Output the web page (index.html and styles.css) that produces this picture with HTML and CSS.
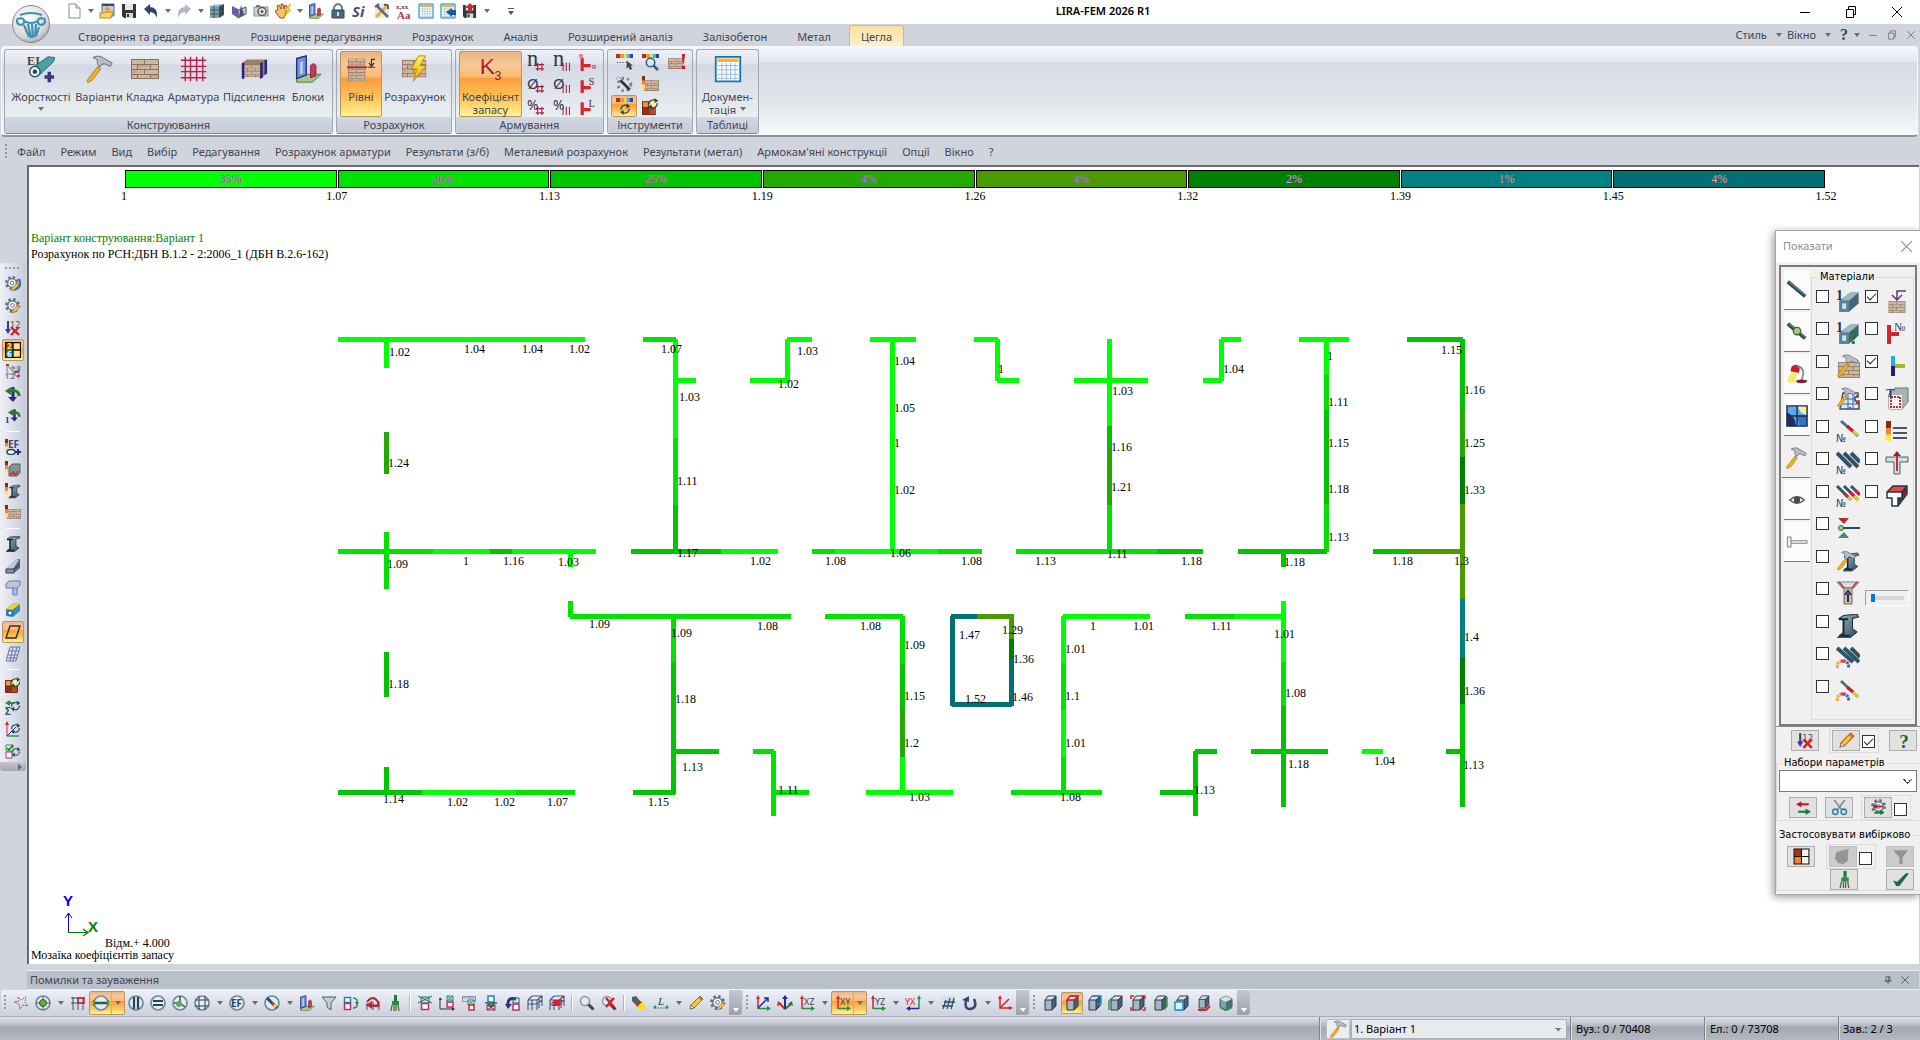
FILE: index.html
```html
<!DOCTYPE html>
<html lang="uk">
<head>
<meta charset="utf-8">
<title>LIRA-FEM 2026 R1</title>
<link rel="stylesheet" href="styles.css">
</head>
<body>
<svg class="defs" aria-hidden="true">
<defs>
<linearGradient id="steel" x1="0" y1="0" x2="1" y2="1"><stop offset="0" stop-color="#9dbdca"/><stop offset="1" stop-color="#2c4454"/></linearGradient>
<linearGradient id="bolt" x1="0" y1="0" x2="0" y2="1"><stop offset="0" stop-color="#fff35c"/><stop offset="1" stop-color="#f0a800"/></linearGradient>
<linearGradient id="kgrad" x1="0" y1="0" x2="0" y2="1"><stop offset="0" stop-color="#f0243c"/><stop offset="1" stop-color="#5c2238"/></linearGradient>
<radialGradient id="orb" cx=".4" cy=".3" r=".8"><stop offset="0" stop-color="#fff"/><stop offset=".7" stop-color="#d4d6d9"/><stop offset="1" stop-color="#8f9297"/></radialGradient>
</defs>
<symbol id="brick" viewBox="0 0 28 20"><path fill="#8a7260" d="M0 0h28v20H0z"/><path fill="#cbb89d" d="M1 1h12v4H1zM14 1h13v4H14zM1 6h5v4H1zM7 6h12v4H7zM20 6h7v4h-7zM1 11h12v4H1zM14 11h13v4H14zM1 16h5v3H1zM7 16h12v3H7zM20 16h7v3h-7z"/><path fill="#c9a391" d="M7 6h12v2H7zM1 11h5v3H1zM20 16h7v2h-7z"/></symbol>
<symbol id="hammer" viewBox="0 0 32 32"><path d="M20 8 10 22" stroke="#9aa0a6" stroke-width="3"/><path d="M14 14 3 28q-2 4 2 3l4-3 9-12z" fill="#f2b01e" stroke="#b87b10"/><path d="M9 3q7-4 13 1l9 5-2 4-7-3q-3 0-5 3l-3-3q2-5-5-7z" fill="#b9bec3" stroke="#5d6267"/></symbol>
<symbol id="pencil" viewBox="0 0 16 16"><path d="M2 14 3 10 12 1 15 4 6 13z" fill="#f8c53a" stroke="#a8651a"/><path d="M2 14 3 10 6 13z" fill="#eee" stroke="#555" stroke-width=".6"/><path d="m11 2 3 3" stroke="#d06a5a" stroke-width="2"/></symbol>
<symbol id="gear" viewBox="0 0 16 16"><circle cx="8" cy="8" r="6.500" fill="none" stroke="#5f7080" stroke-width="3" stroke-dasharray="2.600 2.500"/><circle cx="8" cy="8" r="5" fill="#eef1f5" stroke="#5f7080" stroke-width="1.500"/><circle cx="8" cy="8" r="2" fill="#fff" stroke="#5f7080"/></symbol>
<symbol id="cycle" viewBox="0 0 16 16"><g fill="none" stroke="#23465c" stroke-width="1.600"><path d="M2.500 9a5.500 5.500 0 0 1 9-5M13.500 7a5.500 5.500 0 0 1-9 5"/></g><path d="m10 0 5 4-5 3zM6 9v7l-5-4z" fill="#23465c"/></symbol>
<symbol id="gearcycle" viewBox="0 0 16 16"><use href="#gear" x="0" y="0" width="14" height="14"/><path d="M14 3q4 8-5 11" fill="none" stroke="#2f6d9c" stroke-width="2"/><use href="#pencil" x="5" y="6" width="10" height="10"/></symbol>
<symbol id="gearpen" viewBox="0 0 16 16"><use href="#gear" x="0" y="0" width="15" height="15"/><use href="#pencil" x="6" y="6" width="10" height="10"/></symbol>
<symbol id="down12x" viewBox="0 0 16 16"><path d="M3 1v9" stroke="#353a9c" stroke-width="2"/><path d="M0 9h6l-3 5z" fill="#353a9c"/><text x="5" y="8" font-size="9" fill="#555">12</text><path d="m6 7 8 8M14 7l-8 8" stroke="#d4202a" stroke-width="2.400"/></symbol>
<symbol id="tiles" viewBox="0 0 16 16"><path fill="#c22b14" d="M1 1h7v7H1z"/><path fill="#1878bd" d="M1 8h7v7H1z"/><path fill="#ffe08a" d="M8 1h7v14H8z"/><path d="M.5.500h15v15H.5zM8 0v16M8 8h7" fill="none" stroke="#111" stroke-width="1.300"/><text x="2" y="7" font-size="8" font-weight="bold" fill="#ff0">2</text><text x="2" y="15" font-size="8" font-weight="bold" fill="#fff">6</text></symbol>
<symbol id="mesh12" viewBox="0 0 16 16"><path d="M2 1 14 15M2 1v9h9M5 4h9v9" fill="none" stroke="#7f8b94"/><path d="M1 1h3M9 8h5M12 12h3" stroke="#b03a3a" stroke-width="2"/><text x="6" y="7" font-size="7" fill="#444">1.2</text><text x="0" y="15" font-size="7" fill="#444">1.2</text></symbol>
<symbol id="rot3d" viewBox="0 0 16 16"><path d="M8 1v11" stroke="#282a80" stroke-width="3"/><path d="M3 11h9l-4 5z" fill="#282a80"/><path d="M3 5q11-2 11 5" fill="none" stroke="#2a7d25" stroke-width="3"/><path d="M0 5 6 1v8z" fill="#2a7d25"/></symbol>
<symbol id="rot1" viewBox="0 0 16 16"><use href="#rot3d" x="3" width="13" height="14"/><text x="0" y="15" font-size="9" font-weight="bold" font-family="Liberation Serif" fill="#30308c">1</text></symbol>
<symbol id="scale" viewBox="0 0 4 16" preserveAspectRatio="none"><path fill="#8c2a10" d="M0 0h4v6H0z"/><path fill="#f5832a" d="M0 6h4v5H0z"/><path fill="#ffe84a" d="M0 11h4v5H0z"/></symbol>
<symbol id="ef" viewBox="0 0 16 16"><use href="#scale" width="3" height="11"/><text x="3" y="9" font-size="10" font-weight="bold" fill="#3c4a7a">EF</text><ellipse cx="6" cy="13" rx="4" ry="2.500" fill="#fff" stroke="#23465c" stroke-width="1.500"/><path d="M10 13h6M13 10v6" stroke="#2a2a8c" stroke-width="2"/></symbol>
<symbol id="slab" viewBox="0 0 16 16"><use href="#scale" width="3" height="12"/><path d="m4 6 3-3h8v9l-3 3H4z" fill="#7f9494" stroke="#4f6060"/><path d="m5 14 3-3 2 3 3-4" stroke="#d42a2a" stroke-width="1.500" fill="none"/></symbol>
<symbol id="ibeam" viewBox="0 0 16 16"><path d="m5 1 9-1 1 2-4 1v7l3 2-5 4H1l3-3h1V4L2 3z" fill="url(#steel)" stroke="#20323c" stroke-width=".7"/><path d="M2 3.500h6M2 14.500h7M5 4v10" stroke="#17252d" stroke-width="1.300"/></symbol>
<symbol id="ibeamscale" viewBox="0 0 16 16"><use href="#scale" width="3" height="12"/><use href="#ibeam" x="3" y="1" width="13" height="15"/></symbol>
<symbol id="brickscale" viewBox="0 0 16 16"><use href="#brick" x="2" y="3" width="14" height="12"/><use href="#scale" width="3" height="12"/></symbol>
<symbol id="boxbeam" viewBox="0 0 16 16"><path d="m1 7 8-6h6v8l-7 6H1z" fill="#486476"/><path d="m1 7 8-6h6l-7 6z" fill="#9db8c6"/><path d="M1 7h7v8H1z" fill="#5f8194"/><path d="M3 9h3v4H3z" fill="#bfe9f2"/></symbol>
<symbol id="wedge" viewBox="0 0 16 16"><path d="M1 11 12 1h3v9l-6 5H1z" fill="#50697a"/><path d="M1 11 12 1l2 1-6 9z" fill="#b9ccd8"/><path d="M1 11h8v4H1zM9 11l6-5" fill="#7d98a8" stroke="#2d4250"/></symbol>
<symbol id="tee" viewBox="0 0 16 16"><path d="m1 4 3-3h11v4l-3 3v6H8V8H1z" fill="#bcc6d6" stroke="#6f7c92"/><path d="M8 8h4v7H8z" fill="#a9bdf0" stroke="#6d86c6"/></symbol>
<symbol id="duct" viewBox="0 0 16 16"><path d="m1 7 8-6 6 1v7l-7 6-7-1z" fill="#2b8fc4"/><path d="m9 1 6 1-8 6-6-1z" fill="#f5d227"/><path d="M3 9h4v4H3z" fill="#fff" stroke="#124e70"/></symbol>
<symbol id="para" viewBox="0 0 16 16"><path d="M5 2h10l-4 12H1z" fill="none" stroke="#24323a" stroke-width="1.400"/></symbol>
<symbol id="paragrid" viewBox="0 0 16 16"><path d="M5 1h10l-4 14H1zM4 5h10M3 9h10M2 12h10M8 1 5 15M12 1 8 15" fill="none" stroke="#6d76a6"/></symbol>
<symbol id="tilecycle" viewBox="0 0 16 16"><path fill="#f09a3a" d="M0 3h6v6H0z"/><path fill="#982c14" d="M0 9h6v6H0z"/><path fill="#b8461c" d="M6 9h6v6H6z"/><path fill="#ffe572" d="M6 3h6v6H6z"/><path d="M.5 3.500h12v12H.5zM6 3v12M0 9h12" fill="none" stroke="#7a2a10"/><circle cx="10.500" cy="5.500" r="3.500" fill="#ffef9a"/><use href="#cycle" x="5" y="0" width="11" height="11"/></symbol>
<symbol id="sumcycle" viewBox="0 0 16 16"><text x="0" y="16" font-size="10" font-weight="bold" fill="#2c5a70">Σ</text><use href="#cycle" x="5" y="1" width="11" height="12"/><path d="M0 4 5 1v6z" fill="#318a3a"/><path d="M4 4h6" stroke="#318a3a" stroke-width="2"/></symbol>
<symbol id="axiscycle" viewBox="0 0 16 16"><path d="M2 15V3" stroke="#d22"/><path d="M2 15h12" stroke="#2a9a4a" stroke-width="1.500"/><path d="m2 15 9-9" stroke="#27318c"/><path d="M0 4l2-4 2 4z" fill="#d22"/><use href="#cycle" x="5" y="2" width="11" height="11"/></symbol>
<symbol id="boxcycle" viewBox="0 0 16 16"><path d="M1 2h7v6H1z" fill="#e9f6ea" stroke="#2b9140"/><path d="m2 5 2 2 4-5" fill="none" stroke="#147028" stroke-width="1.500"/><path d="M1 9h6v6H1z" fill="#fff" stroke="#c82a5a"/><use href="#cycle" x="6" y="3" width="10" height="12"/></symbol>

<symbol id="newdoc" viewBox="0 0 16 16"><path d="M3 1h7l4 4v10H3z" fill="#fff" stroke="#8c8c8c"/><path d="M10 1v4h4" fill="#ddd" stroke="#8c8c8c"/></symbol>
<symbol id="openwin" viewBox="0 0 16 16"><path d="M3 1h12v12H3z" fill="#c5cfdb" stroke="#5d6b80"/><path d="M3 1h12v2H3z" fill="#34496b"/><path d="M1 10h4l1-1h8l-2 6H1z" fill="#f7d469" stroke="#b48a20"/><path d="m8 3 4 4h-2v3H7V7H5z" fill="#e8a126"/></symbol>
<symbol id="save" viewBox="0 0 16 16"><path d="M1 1h14v14H3l-2-2z" fill="#34363c"/><path d="M4 1h8v6H4z" fill="#dfe8ea"/><path d="M5 10h7v5H5z" fill="#d5d5d5"/><path d="M6 11h2v3H6z" fill="#333"/></symbol>
<symbol id="undo" viewBox="0 0 16 16"><path d="m1 6 6-5v3q8 0 7 11-2-6-7-6v3z" fill="#34406c"/></symbol>
<symbol id="redo" viewBox="0 0 16 16"><path d="M15 6 9 1v3Q1 4 2 15q2-6 7-6v3z" fill="#aeb9c4"/></symbol>
<symbol id="frame3d" viewBox="0 0 16 16"><path d="M1 3h9v12H1z" fill="#7d9fae"/><path d="m1 3 4-2h10l-5 2z" fill="#b8d0da"/><path d="m10 3 5-2v11l-5 3z" fill="#37505e"/><path d="M1 7h9M1 11h9l5-2M10 7l5-2M5 3v12" stroke="#2e4452" fill="none" stroke-width=".8"/></symbol>
<symbol id="book" viewBox="0 0 16 16"><path d="m1 3 6 3v9l-6-4z" fill="#6c5cae"/><path d="m15 4-8 3v8l8-4z" fill="#a7d8a4" stroke="#46527f"/><path d="m10 2 3 10-5 2z" fill="#524588"/></symbol>
<symbol id="camera" viewBox="0 0 16 16"><path d="M1 4h14v9H1z" fill="#d3d3d3" stroke="#8d8d8d"/><path d="M3 2h4v2H3z" fill="#777"/><circle cx="9" cy="8.500" r="4" fill="#eee" stroke="#555" stroke-width="1.500"/><circle cx="9" cy="8.500" r="1.500" fill="#555"/></symbol>
<symbol id="hand" viewBox="0 0 16 16"><path d="M3 7 2 3l2-1 2 4V1h2l1 5 1-4 2 1-1 6-2 6H5l-3-4-2-3z" fill="#f6c36a" stroke="#8a5a1c"/><path d="m15 1-5 6 3 1-5 7 8-8-3-1 3-5z" fill="#ffdd1f" stroke="#c28a00" stroke-width=".5"/></symbol>
<symbol id="blocks" viewBox="0 0 32 32"><path d="m3 27 11-5h17l-10 9H3z" fill="#a6c884" stroke="#42732f"/><path d="m3 4 11-3v22L3 27z" fill="#6d94d8" stroke="#1e2f72" stroke-width="1.500"/><path d="m7 8 3-1v14l-3 1z" fill="#bcd0f4"/><path d="M19 12q4-4 6 0v12l-6 2z" fill="#d0365c" stroke="#7c1634"/></symbol>
<symbol id="lock" viewBox="0 0 16 16"><path d="M4 7V4q4-6 8 0v3" fill="none" stroke="#6f7f8a" stroke-width="2"/><path d="M2 7h12v8H2z" fill="#4b6a85" stroke="#2d4457"/><path d="M8 9v4" stroke="#d5e0ea" stroke-width="2"/></symbol>
<symbol id="si" viewBox="0 0 16 16"><text x="0" y="14" font-size="15" font-style="italic" font-weight="bold" fill="#4c4a74">Si</text></symbol>
<symbol id="tools" viewBox="0 0 16 16"><path d="M1 1h14v14H1z" fill="#e6e9ee"/><path d="m2 14 10-10" stroke="#e0b52b" stroke-width="3"/><path d="m3 3 11 11" stroke="#626a72" stroke-width="2.500"/><path d="M1 4l4-3M10 2q5-1 4 4" stroke="#555" stroke-width="2" fill="none"/></symbol>
<symbol id="xxaa" viewBox="0 0 16 16"><text x="0" y="6" font-size="7" font-family="Liberation Serif" font-weight="bold" fill="#7a2436">x,xx</text><text x="1" y="16" font-size="11" font-family="Liberation Serif" font-weight="bold" fill="#b8324a">Aa</text></symbol>
<symbol id="table" viewBox="0 0 32 32"><path d="M2 2h28v28H2z" fill="#fff" stroke="#1274b8" stroke-width="2"/><path d="M4 4h24v4H4z" fill="#f3b23c"/><path d="M4 12h24M4 17h24M4 22h24M4 27h24M9 9v19M14 9v19M19 9v19M24 9v19" stroke="#86b4d8"/></symbol>
<symbol id="tableleft" viewBox="0 0 16 16"><use href="#table" width="16" height="16"/><path d="m6 9 6-4v2h4v5h-4v2z" fill="#135e9e"/></symbol>
<symbol id="saveup" viewBox="0 0 16 16"><use href="#save" y="1" width="15" height="15"/><path d="m8 0 5 5h-3v4H6V5H3z" fill="#d8232c"/></symbol>
<symbol id="logo" viewBox="0 0 40 40"><circle cx="20" cy="20" r="18.500" fill="url(#orb)" stroke="#85888d"/><g fill="none" stroke="#3a93b4" stroke-width="2.200"><path d="M9 11q11-4 22 0M7 14q-3 6 3 7 4-1 3-5-2-3-5-1M33 14q3 6-3 7-4-1-3-5 2-3 5-1M13 17q7 4 14 0"/><path d="m13 21 5 12M17 20l3 14M21 20l1 14M25 20l-1 13M28 23l-3 9"/></g></symbol>

<symbol id="stiff" viewBox="0 0 32 32"><text x="0" y="11" font-size="14" font-weight="bold" font-family="Liberation Serif" fill="#444">EI</text><path d="M7 14 24 2l8 1-2 5-15 14z" fill="#49a3a5" stroke="#2d5f66"/><circle cx="9" cy="19" r="6" fill="#e3f0f0" stroke="#2b4c5c" stroke-width="1.500"/><circle cx="9" cy="19" r="2.500" fill="#24405a"/><path d="M20 25h11M25.500 19v12" stroke="#3c3480" stroke-width="4"/></symbol>
<symbol id="rebar" viewBox="0 0 32 32"><path d="M6 2v28M12 2v28M19 2v28M26 2v28M1 6h29M1 13h29M1 19h29M1 26h29" stroke="#c02048" stroke-width="1.600"/></symbol>
<symbol id="bricks3d" viewBox="0 0 32 32"><path d="m2 9 6-4h22v16l-6 6z" fill="#9b8068"/><use href="#brick" x="4" y="9" width="20" height="18"/><path d="M2 9h3v18H2zM23 9l3-1v18l-3 1zM28 6l3-1v16l-3 2z" fill="#2b2680"/></symbol>
<symbol id="levels" viewBox="0 0 32 32"><use href="#brick" x="0" y="4" width="22" height="14"/><use href="#brick" x="0" y="16" width="22" height="14"/><path d="M0 14h23" stroke="#d01818" stroke-width="2"/><path d="M24 14h8M28 13V5h4M25 9l3 4 3-4" stroke="#333" fill="none" stroke-width="1.300"/></symbol>
<symbol id="calc" viewBox="0 0 32 32"><use href="#brick" x="1" y="5" width="28" height="21"/><path d="M20 1 12 16h6l-4 14 15-18h-7l6-11z" fill="url(#bolt)" stroke="#b87c00"/></symbol>
<symbol id="k3" viewBox="0 0 32 32"><text x="3" y="22" font-size="26" font-family="Liberation Sans" fill="url(#kgrad)">K</text><text x="20" y="28" font-size="14" font-family="Liberation Sans" fill="#7c2238">3</text></symbol>
<symbol id="hash" viewBox="0 0 8 8"><path d="M2 0v8M6 0v8M0 2h8M0 6h8" stroke="#b01c40" stroke-width="1"/></symbol>
<symbol id="bars" viewBox="0 0 8 8"><path d="M1.500 0v8M4.500 0v8M7.500 0v8" stroke="#b01c40" stroke-width="1"/></symbol>
<symbol id="n1" viewBox="0 0 16 16"><text x="0" y="11" font-size="21" font-family="Liberation Serif" fill="#2e3358">n</text><use href="#hash" x="8" y="8" width="8" height="8"/></symbol>
<symbol id="n2" viewBox="0 0 16 16"><text x="0" y="11" font-size="21" font-family="Liberation Serif" fill="#2e3358">n</text><use href="#bars" x="8" y="8" width="8" height="8"/></symbol>
<symbol id="d1" viewBox="0 0 16 16"><text x="0" y="12" font-size="14" fill="#2e3358">Ø</text><use href="#hash" x="8" y="8" width="8" height="8"/></symbol>
<symbol id="d2" viewBox="0 0 16 16"><text x="0" y="12" font-size="14" fill="#2e3358">Ø</text><use href="#bars" x="8" y="8" width="8" height="8"/></symbol>
<symbol id="p1" viewBox="0 0 16 16"><text x="0" y="11" font-size="13" fill="#2e3358">%</text><use href="#hash" x="8" y="8" width="8" height="8"/></symbol>
<symbol id="p2" viewBox="0 0 16 16"><text x="0" y="11" font-size="13" fill="#2e3358">%</text><use href="#bars" x="8" y="8" width="8" height="8"/></symbol>
<symbol id="t0" viewBox="0 0 16 16"><path d="M3 4v12M3 11h8" stroke="#d8242c" stroke-width="3"/><use href="#hash" x="0" y="0" width="4" height="4"/><use href="#hash" x="12" y="10" width="4" height="4"/></symbol>
<symbol id="ts" viewBox="0 0 16 16"><path d="M3 4v12M3 11h8" stroke="#d8242c" stroke-width="3"/><text x="9" y="8" font-size="10" font-family="Liberation Serif" fill="#5a2438">S</text></symbol>
<symbol id="tl" viewBox="0 0 16 16"><path d="M3 4v12M3 11h8" stroke="#d8242c" stroke-width="3"/><text x="9" y="8" font-size="10" font-family="Liberation Serif" fill="#5a2438">L</text></symbol>
<symbol id="rainbow" viewBox="0 0 16 4"><path fill="#b52a22" d="M0 0h4v4H0z"/><path fill="#f39a20" d="M4 0h4v4H4z"/><path fill="#f7e93a" d="M8 0h2v4H8z"/><path fill="#3cb8c8" d="M10 0h3v4h-3z"/><path fill="#2a4694" d="M13 0h3v4h-3z"/></symbol>
<symbol id="pickscale" viewBox="0 0 16 16"><use href="#rainbow" width="16" height="4"/><path d="M1 8h8" stroke="#333" stroke-dasharray="1 1.500"/><path d="m10 6 0 8 2-2 1 3 2-1-1-3h2z" fill="#444"/></symbol>
<symbol id="zoomscale" viewBox="0 0 16 16"><use href="#rainbow" width="16" height="4"/><circle cx="8" cy="8" r="4" fill="#d5edf8" stroke="#3d5d75" stroke-width="1.500"/><path d="m11 11 4 4" stroke="#3d5d75" stroke-width="2.500"/></symbol>
<symbol id="brickwarn" viewBox="0 0 16 16"><use href="#brick" x="0" y="3" width="14" height="12"/><path d="M13 0h3l-1 9h-1zM13 11h3v3h-3z" fill="#cf1628"/></symbol>
<symbol id="wand" viewBox="0 0 16 16"><circle cx="8" cy="8" r="6" fill="none" stroke="#b04ad0" stroke-width="2.500" stroke-dasharray="2 3"/><circle cx="8" cy="8" r="6" fill="none" stroke="#4cc06a" stroke-width="2.500" stroke-dasharray="2 8"/><path d="m1 1 12 12" stroke="#333" stroke-width="2.500"/><path d="m1 1 3 3" stroke="#eee" stroke-width="2"/></symbol>
<symbol id="scalecycle" viewBox="0 0 16 16"><use href="#rainbow" width="16" height="4"/><use href="#cycle" x="3" y="5" width="11" height="11"/></symbol>

<symbol id="star" viewBox="0 0 16 16"><path d="M5 2 8 5l5-3-1 5 3 4-5-1-3 4-1-5-5-2 5-1z" fill="none" stroke="#b8505c" stroke-dasharray="2 1"/></symbol>
<symbol id="ring" viewBox="0 0 16 16"><circle cx="8" cy="8" r="7" fill="#e3eef4" stroke="#718b9d" stroke-width="1.700"/></symbol>
<symbol id="rnode" viewBox="0 0 16 16"><use href="#ring"/><path d="M8 1v14M1 8h14" stroke="#426b50"/><circle cx="8" cy="8" r="3.500" fill="#67a552" stroke="#30682e"/></symbol>
<symbol id="gridred" viewBox="0 0 16 16"><path d="M3 2v13M8 2v13M13 2v13M1 3h14M1 8h14" stroke="#3c5464" fill="none"/><path d="M8 3h6v5H8z" fill="none" stroke="#d02030" stroke-width="1.500"/><path d="M2 2h2v2H2zM2 7h2v2H2z" fill="#2d9040"/></symbol>
<symbol id="rh" viewBox="0 0 16 16"><use href="#ring"/><path d="M2 8h12" stroke="#2e5a40" stroke-width="2.500"/><path d="M1 5v6M15 5v6" stroke="#3c9a50" stroke-width="2"/></symbol>
<symbol id="rv" viewBox="0 0 16 16"><use href="#ring"/><path d="M6 2v12M10 2v12" stroke="#274458" stroke-width="2.200"/></symbol>
<symbol id="re" viewBox="0 0 16 16"><use href="#ring"/><path d="M3 6h10M3 10h10" stroke="#274458" stroke-width="2.200"/></symbol>
<symbol id="rp" viewBox="0 0 16 16"><use href="#ring"/><path d="M8 8V1M8 8H2M8 8l5 4" stroke="#375a46" stroke-width="1.500"/><circle cx="7" cy="9" r="3" fill="#67a552"/></symbol>
<symbol id="rg" viewBox="0 0 16 16"><use href="#ring"/><path d="M5 1v14M11 1v14M1 5h14M1 11h14" stroke="#274458"/></symbol>
<symbol id="ref" viewBox="0 0 16 16"><use href="#ring"/><text x="2" y="12" font-size="10" font-weight="bold" fill="#2a4456">EF</text></symbol>
<symbol id="rr" viewBox="0 0 16 16"><use href="#ring"/><path d="m3 3 10 10" stroke="#2c4b66" stroke-width="3"/><path d="m8 8 2 2" stroke="#e33" stroke-width="3"/><path d="m10 10 2 2" stroke="#fd3" stroke-width="3"/></symbol>
<symbol id="funnel" viewBox="0 0 16 16"><path d="M1 2h14L10 8v7l-4-3V8z" fill="#c4d0d2" stroke="#4f5f62"/></symbol>
<symbol id="swapbox" viewBox="0 0 16 16"><path d="M1.500 2.500h6v5h-6z" fill="#fff" stroke="#1a88b8" stroke-width="1.500"/><path d="M1.500 8.500h6v6h-6z" fill="#fff" stroke="#c8286a" stroke-width="1.500"/><path d="M10 3q5 0 4 5M10 13q4 0 4-3" fill="none" stroke="#2f8a46" stroke-width="1.500"/><path d="M12 7h4l-2 4z" fill="#2f8a46"/></symbol>
<symbol id="undogrid" viewBox="0 0 16 16"><path d="M2 8v7M8 6v9M14 6v9M1 10h14" stroke="#42596a"/><path d="M2 7q6-8 11 0v4H6" fill="none" stroke="#c8202c" stroke-width="2"/><path d="m1 10 6-4v8z" fill="#c8202c"/></symbol>
<symbol id="brush" viewBox="0 0 16 16"><path d="M7 0h3v6H7z" fill="#1f7a3a"/><path d="M5 6h7v4H5z" fill="#2a8a4a"/><path d="m5 10-1 6M7 10v6M9 10v6M11 10l1 6" stroke="#5c6a40" stroke-width="1.300"/></symbol>
<symbol id="boxx" viewBox="0 0 16 16"><path d="M4 2h8v6H4zM1 1l14 7M15 1 1 8" fill="none" stroke="#1b6e54"/><path d="M4.500 8.500h7v6h-7z" fill="#fff" stroke="#c8286a" stroke-width="1.500"/></symbol>
<symbol id="movebox" viewBox="0 0 16 16"><path d="M1 4v10h13" fill="none" stroke="#333"/><path d="m0 5 1-3 2 3zM13 12l3 2-3 2z" fill="#333"/><path d="M8 1h6v5H8zM8 1l6 5M14 1 8 6" fill="none" stroke="#1b8a6e"/><path d="M8 7h6v5H8z" fill="#fff" stroke="#c8286a" stroke-width="1.500"/></symbol>
<symbol id="winbox" viewBox="0 0 16 16"><path d="M1 1h14v3H1z" fill="#b4b8d8"/><path d="M1.500 1.500h13v5h-13z" fill="none" stroke="#8a8eb0"/><path d="M7 5h6v5H7zM7 5l6 5M13 5l-6 5" fill="#fff" stroke="#1b8a5e"/><path d="M8 10h5v5H8z" fill="#fff" stroke="#c8283a" stroke-width="1.500"/></symbol>
<symbol id="downbox" viewBox="0 0 16 16"><path d="M5 1h6v6H5z" fill="#fff" stroke="#1a88b8" stroke-width="1.500"/><path d="M4 10h8v5H4zM4 10l8 5M12 10l-8 5" fill="none" stroke="#a02038"/><path d="M2 8h12M5 8l3 4 3-4" fill="none" stroke="#1b6e54" stroke-width="1.500"/></symbol>
<symbol id="backbox" viewBox="0 0 16 16"><path d="M3 10q-1-8 8-6" fill="none" stroke="#2f2f78" stroke-width="3"/><path d="M0 9h7l-4 5z" fill="#2f2f78"/><path d="M8 3h6v5H8z" fill="none" stroke="#1b6e54"/><path d="M8 9h6v6H8z" fill="#fff" stroke="#c8286a" stroke-width="1.500"/></symbol>
<symbol id="grid3d" viewBox="0 0 16 16"><path d="M1 5v10M5 5v10M10 5v10M1 5h9M1 9h9M5 1h10v10M1 5l4-4M10 5l5-4M12 3v10M10 9l5-4" fill="none" stroke="#42597a" stroke-width="1.100"/></symbol>
<symbol id="gridfill" viewBox="0 0 16 16"><use href="#grid3d"/><path d="m2 8 4-3h8l-4 3zM2 11l4-3h8l-4 3z" fill="#d4202c"/></symbol>
<symbol id="mag" viewBox="0 0 16 16"><circle cx="6" cy="6" r="4.500" fill="#dfeef4" stroke="#8a979e" stroke-width="1.500"/><path d="m9.500 9.500 5 5" stroke="#444" stroke-width="3"/></symbol>
<symbol id="magx" viewBox="0 0 16 16"><use href="#mag"/><path d="m5 3 8 9M13 3l-8 9" stroke="#d41c24" stroke-width="2.500"/></symbol>
<symbol id="torch" viewBox="0 0 16 16"><path d="m1 2 4-1 5 6-4 4-5-5z" fill="#555f66"/><path d="m10 7 5 2-1 6-7 0-1-4z" fill="#ffdf20"/><path d="m5 10 5-4 1 1-5 5z" fill="#c0302a"/></symbol>
<symbol id="ldim" viewBox="0 0 16 16"><text x="5" y="10" font-size="11" font-style="italic" font-family="Liberation Serif" fill="#333">L</text><path d="M1 13h14" stroke="#2d9046" stroke-dasharray="2 1"/><circle cx="2" cy="12" r="1.500" fill="#2d9046"/><circle cx="14" cy="12" r="1.500" fill="#2d9046"/></symbol>
<symbol id="ax" viewBox="0 0 16 16"><path d="M3 2v12" stroke="#d22" stroke-width="1.500"/><path d="M3 13.500h11" stroke="#22943f" stroke-width="1.500"/><path d="m1 4 2-4 2 4z" fill="#d22"/><path d="m12 11 4 2.500-4 2.500z" fill="#22943f"/></symbol>
<symbol id="axyz" viewBox="0 0 16 16"><use href="#ax"/><path d="m3 13 9-9M9 3h4v4" fill="none" stroke="#2a2a90" stroke-width="1.500"/></symbol>
<symbol id="ax3" viewBox="0 0 16 16"><path d="M8 9V2" stroke="#2a2a90" stroke-width="2"/><path d="M8 14 3 9" stroke="#d22" stroke-width="2"/><path d="m8 14 6-5" stroke="#28783a" stroke-width="2"/><path d="m8 0 3 4H5zM7 8h2v6H7z" fill="#2a2a90"/><path d="m0 11 1-5 4 3z" fill="#d22"/><path d="m16 11-1-5-4 3z" fill="#28783a"/></symbol>
<symbol id="axz" viewBox="0 0 16 16"><use href="#ax"/><text x="5" y="10" font-size="9" fill="#444">XZ</text></symbol>
<symbol id="axy" viewBox="0 0 16 16"><use href="#ax"/><text x="5" y="10" font-size="9" fill="#444">XY</text></symbol>
<symbol id="ayz" viewBox="0 0 16 16"><use href="#ax"/><text x="5" y="10" font-size="9" fill="#444">YZ</text></symbol>
<symbol id="ayx" viewBox="0 0 16 16"><text x="0" y="10" font-size="9" fill="#d22">YX</text><path d="M14 2v12" stroke="#22943f" stroke-width="1.500"/><path d="M14 13.500H3" stroke="#2a2a90" stroke-width="1.500"/><path d="m12 4 2-4 2 4z" fill="#22943f"/><path d="m5 11-4 2.500 4 2.500z" fill="#2a2a90"/></symbol>
<symbol id="hashp" viewBox="0 0 16 16"><path d="M1 1h14v14H1z" fill="#cfe2ee"/><path d="m6 5-3 9M10 3 7 14M14 3l-3 11M4 7h11M2 11h11" stroke="#33506a" stroke-width="1.300"/></symbol>
<symbol id="rotate" viewBox="0 0 16 16"><path d="M4 5q-2 9 4 9 8-1 4-10" fill="none" stroke="#3a4470" stroke-width="2.500"/><path d="M0 5 7 1v6z" fill="#3a4470"/></symbol>
<symbol id="axr" viewBox="0 0 16 16"><path d="M3 2v11h11M3 13l9-9" fill="none" stroke="#d22" stroke-width="1.500"/><path d="m1 4 2-4 2 4zM12 11l4 2-4 2z" fill="#d22"/></symbol>
<symbol id="cube" viewBox="0 0 16 16"><path d="M3 5h7v10H3z" fill="#a5b5c2"/><path d="m3 5 3-4h8l-4 4z" fill="#dde7ec"/><path d="m10 5 4-4v10l-4 4z" fill="#4a6276"/><path d="M3 5h7v10H3zM3 5l3-4h8v10l-4 4M10 5l4-4" fill="none" stroke="#26394a"/></symbol>
<symbol id="cubet" viewBox="0 0 16 16"><use href="#cube"/><path d="m3 5 3-4h8l-4 4z" fill="none" stroke="#e0222c" stroke-width="1.500"/></symbol>
<symbol id="cubeb" viewBox="0 0 16 16"><use href="#cube"/><path d="M7 1h8v8h-4" fill="none" stroke="#1e90d4" stroke-width="1.500"/></symbol>
<symbol id="cubel" viewBox="0 0 16 16"><use href="#cube"/><path d="M1 15V6l3-3" fill="none" stroke="#2fa43a" stroke-width="1.500"/></symbol>
<symbol id="cubea" viewBox="0 0 16 16"><use href="#cube"/><path d="M1 4V1h3M12 1h3v3M1 12v3h3M12 15h3v-3" fill="none" stroke="#e0222c" stroke-width="1.500"/></symbol>
<symbol id="cuber" viewBox="0 0 16 16"><use href="#cube"/><path d="M15 2v9l-3 4" fill="none" stroke="#2fa43a" stroke-width="1.500"/></symbol>
<symbol id="cubef" viewBox="0 0 16 16"><use href="#cube"/><path d="M1 7h8v8H1z" fill="#dff0fa" stroke="#1e90d4" stroke-width="1.500"/></symbol>
<symbol id="cubed" viewBox="0 0 16 16"><use href="#cube" width="15" height="14"/><path d="M2 15h8l4-4" fill="none" stroke="#e0222c" stroke-width="2"/></symbol>
<symbol id="cubei" viewBox="0 0 16 16"><path d="m8 1 6 3v8l-6 3-6-3V4z" fill="#7ba4a0" stroke="#37565e"/><path d="m8 1 6 3-6 3-6-3z" fill="#cfe3e2"/><path d="m8 7 6-3v8l-6 3z" fill="#4c6d7c"/><path d="m2 13 6 3 6-3" fill="none" stroke="#2fa43a"/></symbol>

<symbol id="rod" viewBox="0 0 24 24"><path d="m2 3 19 16" stroke="#23465a" stroke-width="4"/><path d="m3 3 18 15" stroke="#7fa4b4" stroke-width="1"/></symbol>
<symbol id="rodnode" viewBox="0 0 24 24"><use href="#rod"/><circle cx="12" cy="11" r="4" fill="#a7cc82" stroke="#3c6a34" stroke-width="1.500"/></symbol>
<symbol id="lamp" viewBox="0 0 24 24"><path d="m6 9 6 3-3 10-8-2z" fill="#ffe96a"/><path d="M5 9q0-7 6-7t3 9z" fill="#c41e2a"/><path d="M12 3q7 2 7 8l-2 8" fill="none" stroke="#8a8f92" stroke-width="2"/><ellipse cx="17" cy="20" rx="6" ry="2" fill="#8a1e26"/></symbol>
<symbol id="iso" viewBox="0 0 24 24"><path fill="#5ea9ea" d="M1 1h22v22H1z"/><path d="M1 8q9 4 10 15H1z" fill="#212c66"/><path d="M13 1h10v10Q14 9 13 1z" fill="#f3efa0"/><path d="M12 12h11v11h-8z" fill="#2e74c8"/><path d="M1 1h22v22H1zM12 1v22M1 12h22" fill="none" stroke="#1a2a40" stroke-width="1.500"/></symbol>
<symbol id="eye" viewBox="0 0 24 24"><path d="M4 12q8-7 16 0-8 7-16 0z" fill="#fff" stroke="#555" stroke-width="1.500"/><circle cx="12" cy="12" r="3.500" fill="#4a4a4a"/></symbol>
<symbol id="slide" viewBox="0 0 24 24"><path d="M5 10.500h18v3H5z" fill="#e5e5e5" stroke="#888"/><path d="M1.500 6.500h4v11h-4z" fill="#eee" stroke="#777"/></symbol>
<symbol id="num1" viewBox="0 0 24 24"><use href="#boxbeam" x="2" y="2" width="22" height="22"/><text x="0" y="11" font-size="14" font-weight="bold" font-family="Liberation Serif" fill="#23305e">1</text></symbol>
<symbol id="num1q" viewBox="0 0 24 24"><use href="#num1"/><text x="13" y="23" font-size="18" font-weight="bold" fill="#167a3a">?</text></symbol>
<symbol id="hambrick" viewBox="0 0 24 24"><use href="#brick" x="2" y="8" width="22" height="16"/><use href="#hammer" width="23" height="23"/></symbol>
<symbol id="hammesh" viewBox="0 0 24 24"><path d="M7 7h15v4h-3v4h4v8H4z" fill="#dce9f7" stroke="#3b4e68" stroke-width="1.500"/><path d="M12 8v15M17 8v15M5 18h18M8 13h12" stroke="#3566b8"/><use href="#hammer" width="20" height="22"/><path d="M21 9v2M13 22h2M20 17h3" stroke="#d22" stroke-width="2"/></symbol>
<symbol id="norod" viewBox="0 0 24 24"><path d="m5 2 17 15" stroke="#4b7084" stroke-width="3"/><path d="m11 7 6 5" stroke="#c81e3c" stroke-width="3"/><path d="m17 12 5 4" stroke="#f0c81e" stroke-width="3"/><text x="0" y="23" font-size="11" fill="#33395c">№</text></symbol>
<symbol id="norods" viewBox="0 0 24 24"><path d="m1 2 14 14M8 2l14 14M15 2l9 9" stroke="#2f5468" stroke-width="4"/><text x="0" y="23" font-size="11" fill="#33395c">№</text></symbol>
<symbol id="norodc" viewBox="0 0 24 24"><path d="m1 2 14 14M8 2l14 14M15 2l9 9" stroke="#2f5468" stroke-width="3"/><path d="m8 9 4 4M14 8l4 4M19 6l4 4" stroke="#d4203a" stroke-width="3"/><path d="m12 13 3 3M18 12l4 4" stroke="#f0c81e" stroke-width="3"/><text x="0" y="23" font-size="11" fill="#33395c">№</text></symbol>
<symbol id="tri" viewBox="0 0 24 24"><path d="M2 2h11l-5 6z" fill="#b42a34"/><path d="M2 22h11l-5-6z" fill="#3f8a72"/><path d="M4 12h20" stroke="#234a60" stroke-width="2"/><circle cx="5" cy="12" r="2.500" fill="#a7cc82" stroke="#3c6a34"/></symbol>
<symbol id="hambeam" viewBox="0 0 24 24"><use href="#ibeam" x="6" y="3" width="18" height="20"/><use href="#hammer" width="20" height="23"/></symbol>
<symbol id="punch" viewBox="0 0 24 24"><path d="M1 1h22l-5 6H6z" fill="#d5dfe6" stroke="#788791"/><path d="m3 1 5 6M21 1l-5 6" stroke="#d22" stroke-width="1.500"/><path d="M8 7h8v16H8z" fill="#cdbb9b" stroke="#776a50"/><path d="M12 21V13M9 14l3-4 3 4" stroke="#1d2c6a" stroke-width="2" fill="none"/></symbol>
<symbol id="arc" viewBox="0 0 14 10"><path d="M1 9q0-7 6-7t6 7" fill="none" stroke="#f4a020" stroke-width="3" stroke-dasharray="2.500 1"/><path d="M7 2q5 0 6 7" fill="none" stroke="#3468d0" stroke-width="3" stroke-dasharray="2.500 1"/><path d="M5 2h4" stroke="#d43a9a" stroke-width="3"/></symbol>
<symbol id="rodsarc" viewBox="0 0 24 24"><path d="m1 2 16 14M8 2l15 14M15 2l9 9" stroke="#2f5468" stroke-width="4"/><use href="#arc" x="0" y="13" width="14" height="10"/></symbol>
<symbol id="rodarc" viewBox="0 0 24 24"><path d="m5 2 17 16" stroke="#4b7084" stroke-width="3"/><path d="m11 8 6 5" stroke="#c81e3c" stroke-width="3"/><path d="m17 13 5 5" stroke="#f0c81e" stroke-width="3"/><use href="#arc" x="0" y="13" width="14" height="10"/></symbol>
<symbol id="loadbrick" viewBox="0 0 24 24"><use href="#brick" x="1" y="12" width="22" height="12"/><path d="M12 11V2h9M7 6l5 5 5-5" fill="none" stroke="#5c3484" stroke-width="1.500"/></symbol>
<symbol id="tno" viewBox="0 0 24 24"><path d="M4 4v19M4 13h10" stroke="#d8242c" stroke-width="4"/><text x="9" y="10" font-size="12" font-family="Liberation Serif" fill="#33395c">№</text></symbol>
<symbol id="tcol" viewBox="0 0 24 24"><path d="M8 2v10" stroke="#1fb0e4" stroke-width="4"/><path d="M8 12v10" stroke="#28206c" stroke-width="4"/><path d="M10 12h10" stroke="#a4bc1a" stroke-width="4"/></symbol>
<symbol id="tconc" viewBox="0 0 24 24"><path d="m4 8 6-6h13v14l-6 7H4z" fill="#a8b4b4" stroke="#66757a"/><path d="M4 9h13v14H4z" fill="#fff"/><path d="M6 11h9v10H6z" fill="none" stroke="#d22" stroke-width="2" stroke-dasharray="2 1"/><text x="1" y="11" font-size="13" font-weight="bold" font-family="Liberation Serif" fill="#2c4a80">T</text></symbol>
<symbol id="scalelines" viewBox="0 0 24 24"><use href="#scale" x="1" y="2" width="5" height="20"/><path d="M8 9h14M8 14h14M8 19h14" stroke="#4e5468" stroke-width="2"/></symbol>
<symbol id="tarrow" viewBox="0 0 24 24"><path d="M1 6h22v5h-8v12H9V11H1z" fill="#cfdedf" stroke="#3f6470"/><path d="M12 20V4" stroke="#d22" stroke-width="2"/><path d="m8 5 4-5 4 5z" fill="#a31c24"/></symbol>
<symbol id="tred" viewBox="0 0 24 24"><path d="m2 8 6-6h14l-5 6z" fill="#f0444a"/><path d="m17 8 5-6v7l-9 12v-7h4z" fill="#8c1a20"/><path d="M2 8h15v6h-4v8H7v-8H2z" fill="#fff"/><path d="m2 8 6-6h14v8l-9 12H7v-8H2zM2 8h15l5-6M17 8v6h-4v8" fill="none" stroke="#1c3a50" stroke-width="1.500"/></symbol>
<symbol id="help" viewBox="0 0 16 16"><text x="4" y="15" font-size="18" font-weight="bold" font-family="Liberation Serif" fill="#1c6a34">?</text></symbol>
<symbol id="swap" viewBox="0 0 16 16"><path d="M5 5h8" stroke="#b41e2a" stroke-width="2"/><path d="M1 5l5-3v6z" fill="#b41e2a"/><path d="M3 12h8" stroke="#1c7a40" stroke-width="2"/><path d="m15 12-5-3v6z" fill="#1c7a40"/></symbol>
<symbol id="scissors" viewBox="0 0 16 16"><path d="m3 1 7 9M13 1 6 10" stroke="#7b8a94" stroke-width="1.500"/><circle cx="4" cy="12" r="2.500" fill="none" stroke="#2e86b4" stroke-width="1.500"/><circle cx="12" cy="12" r="2.500" fill="none" stroke="#2e86b4" stroke-width="1.500"/></symbol>
<symbol id="gearswap" viewBox="0 0 16 16"><use href="#gear" x="1" y="0" width="14" height="14"/><use href="#swap" y="3" width="16" height="13"/></symbol>
<symbol id="window4" viewBox="0 0 16 16"><path fill="#f3f3f3" d="M1 1h14v14H1z"/><path fill="#a8321e" d="M1 1h7v7H1z"/><path fill="#f58020" d="M1 8h7v7H1z"/><path d="M1 1h14v14H1zM8 1v14M1 8h14" fill="none" stroke="#111"/></symbol>
<symbol id="blob" viewBox="0 0 16 16"><path d="M2 4 8 2l6-1-1 4v7l-4 3-5-1-3-4z" fill="#949494"/></symbol>
<symbol id="funneloff" viewBox="0 0 16 16"><path d="M1 2h14L10 9v6H7V9z" fill="#949494"/></symbol>
<symbol id="check" viewBox="0 0 16 16"><path d="m1 9 4 1 8-8 3 0-9 12H4z" fill="#1c6a44"/></symbol>
<symbol id="min" viewBox="0 0 16 16"><path d="M3 8.500h10" stroke="currentColor"/></symbol>
<symbol id="restore" viewBox="0 0 16 16"><path d="M3.500 5.500h7v8h-7zM5.500 5.500v-3h7v8h-2" fill="none" stroke="currentColor"/></symbol>
<symbol id="close" viewBox="0 0 16 16"><path d="m3 3 10 10M13 3 3 13" stroke="currentColor"/></symbol>
<symbol id="pin" viewBox="0 0 16 16"><path d="M5.500 3.500h5v6h-5zM3 9.500h10M8 10v4M9 4v5" fill="none" stroke="currentColor"/></symbol>
</svg>

<header class="titlebar">
<button class="app" aria-label="Меню програми"><svg class="logo"><use href="#logo"/></svg></button>
<div class="quick">
<button class="tb" aria-label="Новий"><svg><use href="#newdoc"/></svg></button><button class="dd" aria-label="Ще: новий"></button>
<button class="tb" aria-label="Відкрити"><svg><use href="#openwin"/></svg></button>
<button class="tb" aria-label="Зберегти"><svg><use href="#save"/></svg></button>
<button class="tb" aria-label="Назад"><svg><use href="#undo"/></svg></button><button class="dd" aria-label="Ще: назад"></button>
<button class="tb" aria-label="Вперед"><svg><use href="#redo"/></svg></button><button class="dd" aria-label="Ще: вперед"></button>
<button class="tb" aria-label="Модель"><svg><use href="#frame3d"/></svg></button>
<button class="tb" aria-label="Книга"><svg><use href="#book"/></svg></button>
<button class="tb" aria-label="Знімок"><svg><use href="#camera"/></svg></button>
<button class="tb" aria-label="Розрахувати"><svg><use href="#hand"/></svg></button><button class="dd" aria-label="Ще: розрахувати"></button>
<button class="tb" aria-label="Блоки"><svg><use href="#blocks"/></svg></button>
<button class="tb" aria-label="Блокування"><svg><use href="#lock"/></svg></button>
<button class="tb" aria-label="Одиниці"><svg><use href="#si"/></svg></button>
<button class="tb" aria-label="Інструменти"><svg><use href="#tools"/></svg></button>
<button class="tb" aria-label="Шрифти"><svg><use href="#xxaa"/></svg></button>
<button class="tb" aria-label="Таблиця"><svg><use href="#table"/></svg></button>
<button class="tb" aria-label="Імпорт таблиці"><svg><use href="#tableleft"/></svg></button>
<button class="tb" aria-label="Експорт"><svg><use href="#saveup"/></svg></button><button class="dd" aria-label="Ще: експорт"></button>
<button class="tb custom" aria-label="Налаштувати панель"></button>
</div>
<h1 class="apptitle">LIRA-FEM 2026 R1</h1>
<div class="winctl"><button aria-label="Згорнути"><svg><use href="#min"/></svg></button><button aria-label="Відновити"><svg><use href="#restore"/></svg></button><button aria-label="Закрити"><svg><use href="#close"/></svg></button></div>
</header>

<nav class="tabs">
<button class="tab">Створення та редагування</button><button class="tab">Розширене редагування</button><button class="tab">Розрахунок</button><button class="tab">Аналіз</button><button class="tab">Розширений аналіз</button><button class="tab">Залізобетон</button><button class="tab">Метал</button><button class="tab tab-on">Цегла</button>
<div class="tabright"><button class="stylebtn">Стиль</button><button class="stylebtn">Вікно</button><button class="stylebtn q">?</button><button class="mdi" aria-label="Згорнути вікно"><svg><use href="#min"/></svg></button><button class="mdi" aria-label="Відновити вікно"><svg><use href="#restore"/></svg></button><button class="mdi" aria-label="Закрити вікно"><svg><use href="#close"/></svg></button></div>
</nav>

<section class="ribbon">
<div class="group"><div class="gbody">
<button class="big w66"><svg><use href="#stiff"/></svg><span>Жорсткості</span><i class="arr"></i></button><button class="big w52"><svg><use href="#hammer"/></svg><span>Варіанти</span></button><button class="big w42"><svg><use href="#brick"/></svg><span>Кладка</span></button><button class="big w56"><svg><use href="#rebar"/></svg><span>Арматура</span></button><button class="big w66"><svg><use href="#bricks3d"/></svg><span>Підсилення</span></button><button class="big w42"><svg><use href="#blocks"/></svg><span>Блоки</span></button>
</div><h2>Конструювання</h2></div>
<div class="group"><div class="gbody">
<button class="big w42 on"><svg><use href="#levels"/></svg><span>Рівні</span></button><button class="big w66"><svg><use href="#calc"/></svg><span>Розрахунок</span></button>
</div><h2>Розрахунок</h2></div>
<div class="group"><div class="gbody">
<button class="big w62 on"><svg><use href="#k3"/></svg><span>Коефіцієнт<br>запасу</span></button>
<div class="small">
<button aria-label="Кількість, сітка"><svg><use href="#n1"/></svg></button><button aria-label="Кількість, стрижні"><svg><use href="#n2"/></svg></button><button aria-label="Стики"><svg><use href="#t0"/></svg></button>
<button aria-label="Діаметр, сітка"><svg><use href="#d1"/></svg></button><button aria-label="Діаметр, стрижні"><svg><use href="#d2"/></svg></button><button aria-label="Площа"><svg><use href="#ts"/></svg></button>
<button aria-label="Відсоток, сітка"><svg><use href="#p1"/></svg></button><button aria-label="Відсоток, стрижні"><svg><use href="#p2"/></svg></button><button aria-label="Довжина"><svg><use href="#tl"/></svg></button>
</div></div><h2>Армування</h2></div>
<div class="group"><div class="gbody"><div class="small">
<button aria-label="Вибір за шкалою"><svg><use href="#pickscale"/></svg></button><button aria-label="Огляд шкали"><svg><use href="#zoomscale"/></svg></button><button aria-label="Помилки кладки"><svg><use href="#brickwarn"/></svg></button>
<button aria-label="Кольори"><svg><use href="#wand"/></svg></button><button aria-label="Шкала кладки"><svg><use href="#brickscale"/></svg></button><span></span>
<button class="on" aria-label="Оновити шкалу"><svg><use href="#scalecycle"/></svg></button><button aria-label="Оновити мозаїку"><svg><use href="#tilecycle"/></svg></button>
</div></div><h2>Інструменти</h2></div>
<div class="group"><div class="gbody">
<button class="big w56"><svg><use href="#table"/></svg><span>Докумен-<br>тація<i class="arr inl"></i></span></button>
</div><h2>Таблиці</h2></div>
</section>

<nav class="menu"><i class="grip"></i><button>Файл</button><button>Режим</button><button>Вид</button><button>Вибір</button><button>Редагування</button><button>Розрахунок арматури</button><button>Результати (з/б)</button><button>Металевий розрахунок</button><button>Результати (метал)</button><button>Армокам'яні конструкції</button><button>Опції</button><button>Вікно</button><button>?</button></nav>

<div class="work">
<aside class="side">
<i class="hgrip"></i>
<button aria-label="Оновити параметри"><svg><use href="#gearcycle"/></svg></button>
<button aria-label="Параметри"><svg><use href="#gearpen"/></svg></button>
<button aria-label="Прибрати значення"><svg><use href="#down12x"/></svg></button>
<button class="on" aria-label="Мозаїка"><svg><use href="#tiles"/></svg></button>
<button aria-label="Значення на епюрах"><svg><use href="#mesh12"/></svg></button>
<button aria-label="Обертання"><svg><use href="#rot3d"/></svg></button>
<button aria-label="Обертання 1"><svg><use href="#rot1"/></svg></button>
<i class="hsep"></i>
<button aria-label="Жорсткості"><svg><use href="#ef"/></svg></button>
<button aria-label="Залізобетон"><svg><use href="#slab"/></svg></button>
<button aria-label="Сталь"><svg><use href="#ibeamscale"/></svg></button>
<button aria-label="Кладка"><svg><use href="#brickscale"/></svg></button>
<i class="hsep"></i>
<button aria-label="Двотавр"><svg><use href="#ibeam"/></svg></button>
<button aria-label="Перерізи"><svg><use href="#wedge"/></svg></button>
<button aria-label="Тавр"><svg><use href="#tee"/></svg></button>
<button aria-label="Короб"><svg><use href="#duct"/></svg></button>
<button class="on" aria-label="Контур"><svg><use href="#para"/></svg></button>
<button aria-label="Сітка"><svg><use href="#paragrid"/></svg></button>
<i class="hsep"></i>
<button aria-label="Оновити мозаїку"><svg><use href="#tilecycle"/></svg></button>
<button aria-label="Оновити суми"><svg><use href="#sumcycle"/></svg></button>
<button aria-label="Оновити осі"><svg><use href="#axiscycle"/></svg></button>
<button aria-label="Оновити вибір"><svg><use href="#boxcycle"/></svg></button>
<i class="hend"></i>
</aside>

<main class="main">
<section class="view">
<div class="legend">
<div class="segs"><span class="c1">35%</span><span class="c2">26%</span><span class="c3">25%</span><span class="c4">4%</span><span class="c5">4%</span><span class="c6">2%</span><span class="c7">1%</span><span class="c8">4%</span></div>
<div class="ticks"><span>1</span><span>1.07</span><span>1.13</span><span>1.19</span><span>1.26</span><span>1.32</span><span>1.39</span><span>1.45</span><span>1.52</span></div>
</div>
<p class="cap cap-green">Варіант конструювання:Варіант 1</p>
<p class="cap">Розрахунок по РСН:ДБН В.1.2 - 2:2006_1 (ДБН В.2.6-162)</p>
<svg class="plan" viewBox="29 270 1890 620">
<g fill="none" stroke-width="5">
<path stroke="#00ff00" d="M338 339.500H585M386.500 337V368M675.500 339V438M676 380.500H696M750 380.500H788M787.500 339V383M787 339.500H812M870 339.500H916M892.500 339V551M433 551.500H490M512 551.500H596M570.500 554V567M721 551.500H778M835 551.500H938M902.500 757V792M422 792.500H516M866 792.500H953M974 339.500H998M997.500 339V381M997 380.500H1019M1109.500 339V426M1074 380.500H1148M1221 339.500H1241M1221.500 339V381M1203 380.500H1222M1299 339.500H1349M1326.500 339V375M1063 616.500H1150M1063.500 616V663M1063.500 710V757M1234 616.500H1284M1283.500 601V662M1362 751.500H1383"/>
<path stroke="#00e300" d="M643 339.500H676M675.500 438V505M386.500 532V589M338 551.500H433M812 551.500H835M938 551.500H982M570 616.500H791M570.500 601V617M673.500 617V662M825 616.500H903M902.500 616V664M516 792.500H575M753 751.500H774M773.500 751V816M774 792.500H809M1109.500 505V551M1326.500 375V410M1326.500 504V552M1016 551.500H1157M1063.500 663V710M1063.500 757V792M1011 792.500H1102M1185 616.500H1234M1283.500 662V706"/>
<path stroke="#00c400" d="M675.500 505V553M490 551.500H512M631 551.500H721M673.500 662V794M902.500 664V710M386.500 652V697M386.500 767V792M338 792.500H422M633 792.500H675M674 751.500H719M1109.500 426V448M1326.500 410V504M1407 339.500H1463M1462.500 339V410M1462.500 704V807M1157 551.500H1203M1238 551.500H1327M1283.500 552V567M1373 551.500H1407M1283.500 706V807M1195.500 751V816M1195 751.500H1217M1160 792.500H1196M1251 751.500H1328M1446 751.500H1463"/>
<path stroke="#22aa00" d="M386.500 432V474M902.500 710V757M1109.500 448V505M1462.500 410V457"/>
<path stroke="#4a9a00" d="M1462.500 504V599M1407 551.500H1463M977 616.500H1014M1011.500 616V639"/>
<path stroke="#008000" d="M1462.500 457V504M1462.500 657V704M1011.500 639V660"/>
<path stroke="#008284" d="M1462.500 599V657"/>
<path stroke="#007074" d="M951 616.500H977M952.500 616V706M1011.500 660V706M952 704.500H1012"/>
</g>
<g class="vals">
<text x="389" y="356">1.02</text><text x="464" y="353">1.04</text><text x="522" y="353">1.04</text><text x="569" y="353">1.02</text><text x="661" y="353">1.07</text><text x="797" y="355">1.03</text><text x="778" y="388">1.02</text><text x="679" y="401">1.03</text><text x="894" y="365">1.04</text><text x="894" y="412">1.05</text><text x="894" y="447">1</text><text x="894" y="494">1.02</text><text x="677" y="485">1.11</text><text x="388" y="467">1.24</text><text x="387" y="568">1.09</text><text x="463" y="565">1</text><text x="503" y="565">1.16</text><text x="558" y="566">1.03</text><text x="677" y="557">1.17</text><text x="750" y="565">1.02</text><text x="825" y="565">1.08</text><text x="890" y="557">1.06</text><text x="589" y="628">1.09</text><text x="671" y="637">1.09</text><text x="757" y="630">1.08</text><text x="860" y="630">1.08</text><text x="904" y="649">1.09</text><text x="904" y="700">1.15</text><text x="904" y="747">1.2</text><text x="388" y="688">1.18</text><text x="675" y="703">1.18</text><text x="682" y="771">1.13</text><text x="778" y="794">1.11</text><text x="383" y="803">1.14</text><text x="447" y="806">1.02</text><text x="494" y="806">1.02</text><text x="547" y="806">1.07</text><text x="648" y="806">1.15</text><text x="909" y="801">1.03</text>
<text x="998" y="373">1</text><text x="1112" y="395">1.03</text><text x="1111" y="451">1.16</text><text x="1111" y="491">1.21</text><text x="1223" y="373">1.04</text><text x="1327" y="360">1</text><text x="1328" y="406">1.11</text><text x="1328" y="447">1.15</text><text x="1328" y="493">1.18</text><text x="1328" y="541">1.13</text><text x="1441" y="354">1.15</text><text x="1464" y="394">1.16</text><text x="1464" y="447">1.25</text><text x="1464" y="494">1.33</text><text x="961" y="565">1.08</text><text x="1035" y="565">1.13</text><text x="1107" y="558">1.11</text><text x="1181" y="565">1.18</text><text x="1284" y="566">1.18</text><text x="1392" y="565">1.18</text><text x="1454" y="565">1.3</text><text x="959" y="639">1.47</text><text x="1002" y="634">1.29</text><text x="1013" y="663">1.36</text><text x="1012" y="701">1.46</text><text x="965" y="703">1.52</text><text x="1090" y="630">1</text><text x="1133" y="630">1.01</text><text x="1065" y="653">1.01</text><text x="1065" y="700">1.1</text><text x="1065" y="747">1.01</text><text x="1211" y="630">1.11</text><text x="1274" y="638">1.01</text><text x="1285" y="697">1.08</text><text x="1464" y="641">1.4</text><text x="1464" y="695">1.36</text><text x="1194" y="794">1.13</text><text x="1288" y="768">1.18</text><text x="1374" y="765">1.04</text><text x="1463" y="769">1.13</text><text x="1060" y="801">1.08</text>
</g>
</svg>
<div class="foot">
<svg class="axes" viewBox="0 0 44 44"><path d="M8.500 40V20M5 25l3.500-5 3.500 5" fill="none" stroke="#00f"/><path d="M8 39.500h20M23 36l5 3.500-5 3.500" fill="none" stroke="#008000" stroke-width="1.200"/><text x="3" y="13" fill="#00f">Y</text><text x="28" y="39" fill="#008000">X</text></svg>
<p class="lvl">Відм.+ 4.000</p>
<p>Мозаїка коефіцієнтів запасу</p>
</div>
</section>
<div class="errors"><span>Помилки та зауваження</span><button aria-label="Закріпити"><svg><use href="#pin"/></svg></button><button aria-label="Закрити панель"><svg><use href="#close"/></svg></button></div>
</main>
</div>

<div class="bottom">
<div class="bar"><i class="grip"></i>
<button class="tb" aria-label="Полігон"><svg><use href="#star"/></svg></button>
<button class="tb" aria-label="Вузли"><svg><use href="#rnode"/></svg></button><button class="dd" aria-label="Ще: вузли"></button>
<button class="tb" aria-label="Сітка вузлів"><svg><use href="#gridred"/></svg></button>
<span class="split"><button class="tb" aria-label="Горизонтальні"><svg><use href="#rh"/></svg></button><button class="dd" aria-label="Ще: горизонтальні"></button></span>
<button class="tb" aria-label="Вертикальні"><svg><use href="#rv"/></svg></button>
<button class="tb" aria-label="Паралельні"><svg><use href="#re"/></svg></button>
<button class="tb" aria-label="Сектор"><svg><use href="#rp"/></svg></button>
<button class="tb" aria-label="Блок"><svg><use href="#rg"/></svg></button><button class="dd" aria-label="Ще: блок"></button>
<button class="tb" aria-label="За жорсткістю"><svg><use href="#ref"/></svg></button><button class="dd" aria-label="Ще: жорсткість"></button>
<button class="tb" aria-label="Стрижні"><svg><use href="#rr"/></svg></button><button class="dd" aria-label="Ще: стрижні"></button>
<button class="tb" aria-label="Блоки"><svg><use href="#blocks"/></svg></button>
<button class="tb" aria-label="Фільтр"><svg><use href="#funnel"/></svg></button>
<button class="tb" aria-label="Обмін"><svg><use href="#swapbox"/></svg></button>
<button class="tb" aria-label="Повернути"><svg><use href="#undogrid"/></svg></button>
<button class="tb" aria-label="Очистити"><svg><use href="#brush"/></svg></button>
<i class="vsep"></i>
<button class="tb" aria-label="Фрагмент"><svg><use href="#boxx"/></svg></button>
<button class="tb" aria-label="Перенести"><svg><use href="#movebox"/></svg></button>
<button class="tb" aria-label="Вікно"><svg><use href="#winbox"/></svg></button>
<button class="tb" aria-label="Вниз"><svg><use href="#downbox"/></svg></button>
<button class="tb" aria-label="Відновити"><svg><use href="#backbox"/></svg></button>
<button class="tb" aria-label="Каркас"><svg><use href="#grid3d"/></svg></button>
<button class="tb" aria-label="Перекриття"><svg><use href="#gridfill"/></svg></button>
<i class="vsep"></i>
<button class="tb" aria-label="Збільшити"><svg><use href="#mag"/></svg></button>
<button class="tb" aria-label="Скинути масштаб"><svg><use href="#magx"/></svg></button>
<i class="vsep"></i>
<button class="tb" aria-label="Ліхтар"><svg><use href="#torch"/></svg></button>
<button class="tb" aria-label="Відстань"><svg><use href="#ldim"/></svg></button><button class="dd" aria-label="Ще: відстань"></button>
<button class="tb" aria-label="Олівець"><svg><use href="#pencil"/></svg></button>
<button class="tb" aria-label="Налаштування"><svg><use href="#gearpen"/></svg></button>
</div><i class="more"></i>
<div class="bar"><i class="grip"></i>
<button class="tb" aria-label="Ізометрія"><svg><use href="#axyz"/></svg></button>
<button class="tb" aria-label="Диметрія"><svg><use href="#ax3"/></svg></button>
<button class="tb" aria-label="XZ"><svg><use href="#axz"/></svg></button><button class="dd" aria-label="Ще: XZ"></button>
<span class="split"><button class="tb" aria-label="XY"><svg><use href="#axy"/></svg></button><button class="dd" aria-label="Ще: XY"></button></span>
<button class="tb" aria-label="YZ"><svg><use href="#ayz"/></svg></button><button class="dd" aria-label="Ще: YZ"></button>
<button class="tb" aria-label="YX"><svg><use href="#ayx"/></svg></button><button class="dd" aria-label="Ще: YX"></button>
<button class="tb" aria-label="Площина"><svg><use href="#hashp"/></svg></button>
<button class="tb" aria-label="Повернути вид"><svg><use href="#rotate"/></svg></button><button class="dd" aria-label="Ще: поворот"></button>
<button class="tb" aria-label="Осі"><svg><use href="#axr"/></svg></button>
</div><i class="more"></i>
<div class="bar"><i class="grip"></i>
<button class="tb" aria-label="Куб"><svg><use href="#cube"/></svg></button>
<button class="tb on" aria-label="Зверху"><svg><use href="#cubet"/></svg></button>
<button class="tb" aria-label="Ззаду"><svg><use href="#cubeb"/></svg></button>
<button class="tb" aria-label="Зліва"><svg><use href="#cubel"/></svg></button>
<button class="tb" aria-label="Усе"><svg><use href="#cubea"/></svg></button>
<button class="tb" aria-label="Справа"><svg><use href="#cuber"/></svg></button>
<button class="tb" aria-label="Спереду"><svg><use href="#cubef"/></svg></button>
<button class="tb" aria-label="Знизу"><svg><use href="#cubed"/></svg></button>
<button class="tb" aria-label="Об'єм"><svg><use href="#cubei"/></svg></button>
</div><i class="more"></i>
</div>

<footer class="status">
<div class="cell variant"><button class="ham" aria-label="Варіанти"><svg><use href="#hammer"/></svg></button><select aria-label="Варіант"><option>1. Варіант 1</option></select></div>
<div class="cell cell-w">Вуз.: 0 / 70408</div><div class="cell cell-w">Ел.: 0 / 73708</div><div class="cell cell-n">Зав.: 2 / 3</div>
</footer>

<section class="panel">
<header><h2>Показати</h2><button aria-label="Закрити"><svg><use href="#close"/></svg></button></header>
<div class="pages">
<div class="vtabs"><button aria-label="Елементи"><svg><use href="#rod"/></svg></button><button aria-label="Вузли"><svg><use href="#rodnode"/></svg></button><button aria-label="Освітлення"><svg><use href="#lamp"/></svg></button><button aria-label="Ізополя"><svg><use href="#iso"/></svg></button><button class="vt-on" aria-label="Матеріали"><svg><use href="#hammer"/></svg></button><button aria-label="Видимість"><svg><use href="#eye"/></svg></button><button aria-label="Повзунок"><svg><use href="#slide"/></svg></button></div>
<fieldset class="mats"><legend>Матеріали</legend>
<div class="cols">
<div class="mcol">
<label><input type="checkbox" aria-label="Номер перерізу"><svg><use href="#num1"/></svg></label>
<label><input type="checkbox" aria-label="Невідомий переріз"><svg><use href="#num1q"/></svg></label>
<label><input type="checkbox" aria-label="Варіант кладки"><svg><use href="#hambrick"/></svg></label>
<label><input type="checkbox" aria-label="Варіант плити"><svg><use href="#hammesh"/></svg></label>
<label><input type="checkbox" aria-label="Номер стрижня"><svg><use href="#norod"/></svg></label>
<label><input type="checkbox" aria-label="Номери стрижнів"><svg><use href="#norods"/></svg></label>
<label><input type="checkbox" aria-label="Кольорові стрижні"><svg><use href="#norodc"/></svg></label>
<label><input type="checkbox" aria-label="Закріплення"><svg><use href="#tri"/></svg></label>
<label><input type="checkbox" aria-label="Варіант сталі"><svg><use href="#hambeam"/></svg></label>
<label><input type="checkbox" aria-label="Продавлювання"><svg><use href="#punch"/></svg></label>
<label><input type="checkbox" aria-label="Сталь"><svg><use href="#ibeam"/></svg></label>
<label><input type="checkbox" aria-label="Колір груп"><svg><use href="#rodsarc"/></svg></label>
<label><input type="checkbox" aria-label="Колір стрижня"><svg><use href="#rodarc"/></svg></label>
</div>
<div class="mcol">
<label><input type="checkbox" checked aria-label="Рівень кладки"><svg><use href="#loadbrick"/></svg></label>
<label><input type="checkbox" aria-label="Номер стіни"><svg><use href="#tno"/></svg></label>
<label><input type="checkbox" checked aria-label="Колір стіни"><svg><use href="#tcol"/></svg></label>
<label><input type="checkbox" aria-label="Армування"><svg><use href="#tconc"/></svg></label>
<label><input type="checkbox" aria-label="Шкала"><svg><use href="#scalelines"/></svg></label>
<label><input type="checkbox" aria-label="Зусилля"><svg><use href="#tarrow"/></svg></label>
<label><input type="checkbox" aria-label="Тавр"><svg><use href="#tred"/></svg></label>
<span></span><span></span>
<input class="range" type="range" value="0" aria-label="Розмір">
</div></div>
</fieldset>
</div>
<div class="prow"><button class="pb" aria-label="Прибрати значення"><svg><use href="#down12x"/></svg></button><span class="pg"><button class="pb" aria-label="Змінити"><svg><use href="#pencil"/></svg></button><input type="checkbox" checked aria-label="Автозміна"></span><button class="pb" aria-label="Довідка"><svg><use href="#help"/></svg></button></div>
<fieldset class="pset"><legend>Набори параметрів</legend>
<select aria-label="Набір параметрів"><option></option></select>
<div class="prow"><button class="pb" aria-label="Обміняти"><svg><use href="#swap"/></svg></button><button class="pb" aria-label="Вирізати"><svg><use href="#scissors"/></svg></button><span class="pg"><button class="pb" aria-label="Параметри обміну"><svg><use href="#gearswap"/></svg></button><input type="checkbox" aria-label="Автообмін"></span></div>
</fieldset>
<fieldset class="pset pset-b"><legend>Застосовувати вибірково</legend>
<div class="prow"><button class="pb" aria-label="Вікна"><svg><use href="#window4"/></svg></button><span class="pg"><button class="pb off" disabled aria-label="Область"><svg><use href="#blob"/></svg></button><input type="checkbox" aria-label="За областю"></span><button class="pb off" disabled aria-label="Фільтр"><svg><use href="#funneloff"/></svg></button></div>
<div class="prow prow-2"><button class="pb" aria-label="Очистити"><svg><use href="#brush"/></svg></button><button class="pb" aria-label="Застосувати"><svg><use href="#check"/></svg></button></div>
</fieldset>
</section>
</body>
</html>
```
FILE: styles.css
```css
* { box-sizing: border-box; }
body { margin: 0; min-height: 100vh; display: flex; flex-direction: column; position: relative; background: #d0d4dd; color: #43454f; font: 11px/16px "Noto Sans", "Open Sans", sans-serif; overflow-x: hidden; }
h1, h2, p { margin: 0; font: inherit; }
button { border: 0; padding: 0; margin: 0; background: none; font: inherit; color: inherit; }
svg { display: block; flex: none; }
.defs { position: absolute; width: 0; height: 0; visibility: hidden; }

/* title bar */
.titlebar { display: flex; height: 24px; background: #fff; padding-left: 63px; position: relative; }
.app { position: absolute; left: 11px; top: 4px; z-index: 2; }
.logo { width: 40px; height: 40px; }
.quick { display: flex; height: 22px; }
.tb { width: 22px; height: 22px; display: flex; align-items: center; justify-content: center; border-radius: 2px; }
.tb svg { width: 16px; height: 16px; }
.dd { width: 11px; display: flex; align-items: center; justify-content: center; }
.dd::after, .arr, .stylebtn::after { content: ""; border: 3px solid transparent; border-top: 4px solid #6c6e75; border-bottom: 0; }
.custom { margin-left: 8px; flex-direction: column; gap: 2px; }
.custom::before { content: ""; width: 6px; border-top: 1px solid #555; }
.custom::after { content: ""; border: 3px solid transparent; border-top: 4px solid #555; border-bottom: 0; }
.apptitle { flex: 1; text-align: center; padding-right: 98px; line-height: 22px; color: #000; font-size: 11px; font-weight: 600; }
.winctl { display: flex; color: #000; }
.winctl button { width: 46px; display: flex; align-items: center; justify-content: center; }
.winctl svg { width: 16px; height: 16px; }

/* tabs */
.tabs { display: flex; height: 22px; padding-left: 63px; }
.tab { padding: 0 14px; line-height: 22px; border: 1px solid transparent; border-bottom: 0; height: 21px; margin-top: 1px; }
.tab-on { background: linear-gradient(#fce0a0, #fbf1cc); border-color: #e0b465; border-radius: 4px 4px 0 0; padding: 0 11px; margin-left: 3px; line-height: 21px; }
.tabright { margin-left: auto; display: flex; align-items: flex-start; height: 22px; }
.stylebtn { display: flex; align-items: center; gap: 9px; height: 22px; padding: 0 0 0 5px; }
.q { font: bold 16px/20px "Liberation Serif", serif; color: #34406c; gap: 6px; padding: 0 3px 0 9px; }
.mdi { width: 19px; height: 22px; display: flex; align-items: center; justify-content: center; color: #666; }
.mdi svg { width: 12px; height: 12px; }

/* ribbon */
.ribbon { display: flex; gap: 3px; height: 91px; padding: 2px 4px 4px 2px; margin: 0 2px 0 1px; border: 1px solid #f8f9fc; border-bottom: 2px solid #8f9298; border-radius: 4px; background: linear-gradient(#f6f7fb 0, #e4e7f0 17%, #d6dae6 18%, #e1e5e8 60%, #f3fbfb 100%); }
.group { display: flex; flex-direction: column; height: 85px; padding: 1px 3px 0; border: 1px solid #a4a8b0; border-bottom-color: #7e8188; border-radius: 3px; background: linear-gradient(#eef0f5 0, #e0e3ec 17%, #d4d8e4 18%, #e9eef0 78%); }
.gbody { display: flex; flex: 1; }
.group h2 { margin: 0 -3px; height: 16px; text-align: center; line-height: 16px; background: linear-gradient(#d2d7e4, #c5cbda); }
.big { display: flex; flex-direction: column; align-items: center; padding-top: 3px; line-height: 13px; height: 66px; white-space: nowrap; border: 1px solid transparent; border-radius: 2px; }
.big svg { width: 28px; height: 28px; margin-bottom: 7px; }
.w42 { width: 42px; } .w52 { width: 50px; } .w56 { width: 55px; } .w62 { width: 63px; } .w66 { width: 66px; }
.arr { margin-top: 4px; }
.inl { display: inline-block; margin: 0 0 3px 4px; }
.on, .split { background: linear-gradient(#e9b683 0, #f9c896 20%, #fbb971 39%, #fb9c3c 41%, #fdc85a 75%, #fff39a 100%); border: 1px solid #b99560; border-radius: 2px; }
.small { display: grid; grid-template-columns: repeat(3, 26px); grid-auto-rows: 22px; }
.small button { display: flex; align-items: center; justify-content: center; }
.small svg { width: 17px; height: 17px; }

/* menu row */
.menu { display: flex; align-items: center; height: 28px; padding: 2px 0 0 4px; }
.menu button { padding: 0 8px 0 7px; height: 22px; }
.grip { width: 5px; height: 16px; flex: none; background: radial-gradient(circle at 1px 1px, #9599a4 1px, transparent 1px) 1px 0 / 5px 4px repeat-y; }
.menu .grip { margin-right: 1px; }

/* work area */
.work { flex: 1; display: flex; }
.side { width: 26px; margin-right: 1px; margin-top: 98px; display: flex; flex-direction: column; align-items: center; align-self: flex-start; background: linear-gradient(90deg, #eef0f6, #c7ccda); border-radius: 3px; }
.side button { width: 22px; height: 22px; display: flex; align-items: center; justify-content: center; }
.side svg { width: 16px; height: 16px; }
.hgrip { width: 16px; height: 10px; background: radial-gradient(circle at 1px 1px, #9599a4 1px, transparent 1px) 0 4px / 4px 5px repeat-x; }
.hsep { width: 14px; height: 9px; background: linear-gradient(#fff, #fff) 0 4px / 14px 1px no-repeat; }
.hend { width: 26px; height: 9px; background: linear-gradient(#c2c6d0, #a3a7b1); border-radius: 0 0 3px 3px; display: flex; justify-content: flex-end; align-items: center; padding-right: 4px; }
.hend::after { content: ""; border: 3px solid transparent; border-left: 4px solid #666; border-right: 0; }
.main { flex: 1; min-width: 0; display: flex; flex-direction: column; gap: 6px; }
.view { flex: 1; background: #fff; border: solid #6c6a68; border-width: 2px 0 0 2px; margin-right: 1px; display: flex; flex-direction: column; color: #000; font: 12px/16px "Liberation Serif", serif; }
.legend { padding: 3px 93px 0 96px; }
.segs { display: flex; }
.segs span { flex: 1; text-align: center; line-height: 16px; border: 1px solid #000; margin-right: 1px; }
.c1 { background: #00ff00; color: #ff00ff; } .c2 { background: #00e300; color: #ff1cff; } .c3 { background: #00c400; color: #ff3bff; } .c4 { background: #22aa00; color: #dd55ff; }
.c5 { background: #4a9a00; color: #b565ff; } .c6 { background: #008000; color: #ff7fff; } .c7 { background: #008284; color: #ff7d7b; } .c8 { background: #007074; color: #ff8f8b; }
.ticks { display: flex; justify-content: space-between; margin: 0 -20px 26px -21px; }
.ticks span { width: 40px; text-align: center; }
.cap { padding-left: 2px; }
.cap-green { color: #008000; }
.plan { width: 100%; height: auto; margin-top: 8px; }
.foot { margin-top: auto; padding: 0 0 3px 2px; line-height: 12px; }
.axes { width: 44px; height: 44px; margin-left: 29px; overflow: visible; font: bold 15px "Liberation Sans", sans-serif; }
.lvl { padding-left: 74px; }
.errors { display: flex; align-items: center; height: 20px; background: #b9c0ca; border: 1px solid #eef0f5; border-width: 1px 0; padding: 0 6px 0 3px; margin-right: 1px; }
.errors span { margin-right: auto; }
.errors button { width: 17px; height: 16px; display: flex; align-items: center; justify-content: center; }
.errors svg { width: 12px; height: 12px; }

/* bottom toolbar */
.bottom { display: flex; height: 27px; border-bottom: 1px solid #a9acb8; padding-left: 1px; }
.bar { display: flex; align-items: center; height: 25px; background: linear-gradient(#edf0f7, #ccd1dd); padding-left: 2px; }
.bar .dd { width: 13px; height: 22px; }
.bar .grip { margin-right: 1px; width: 6px; }
.split { display: flex; height: 24px; align-items: center; }
.split .tb { width: 21px; }
.split .dd { border-left: 1px solid #d9a86c; }
.vsep { width: 2px; height: 16px; margin: 0 3px; background: #fff; border-left: 1px solid #b0b4be; }
.more { width: 13px; height: 25px; background: linear-gradient(#c4c8d2, #9da1ac); border-radius: 0 3px 3px 0; margin-right: 1px; display: flex; align-items: flex-end; justify-content: center; padding-bottom: 3px; }
.more::after { content: ""; border: 3px solid transparent; border-top: 4px solid #fff; border-bottom: 0; }

/* status bar */
.status { display: flex; justify-content: flex-end; height: 23px; color: #000; background: linear-gradient(#dfe0e8, #b9bdca 35%, #a4a9b2 45%, #b4b8c1); line-height: 23px; }
.cell { border-left: 1px solid #80838b; box-shadow: inset 1px 0 #dcdee4; padding-left: 5px; }
.cell-w { width: 134px; } .cell-n { width: 82px; padding-left: 4px; }
.variant { display: flex; gap: 1px; padding: 2px 3px 1px 6px; }
.ham { width: 24px; display: flex; align-items: center; justify-content: center; background: #eceff2; border: 1px solid #babdc4; }
.ham svg { width: 18px; height: 18px; }
.status select { width: 216px; border: 1px solid #a5b0bb; font: inherit; line-height: 18px; color: #000; padding: 0 2px; appearance: none; background: linear-gradient(45deg, transparent 50%, #777 50%) calc(100% - 8px) 8px / 3px 3px no-repeat, linear-gradient(-45deg, transparent 50%, #777 50%) calc(100% - 5px) 8px / 3px 3px no-repeat, #e8eaec; }

/* floating panel */
.panel { position: absolute; right: 0; top: 230px; width: 145px; height: 665px; background: #f0f0f0; border: 1px solid #a6a6a6; border-right: 0; box-shadow: -2px 2px 8px #0006; color: #000; font: 11px/14px "DejaVu Sans Condensed", "Noto Sans", sans-serif; display: flex; flex-direction: column; }
.panel header { height: 31px; background: #fff; display: flex; align-items: center; justify-content: space-between; padding: 0 5px 1px 7px; color: #8d8d8d; font: 11px/30px "Noto Sans", sans-serif; }
.panel header svg { width: 17px; height: 17px; }
.pages { display: flex; height: 461px; margin: 3px 3px 0; border: 2px solid #7a7a7a; padding-top: 3px; }
.vtabs { width: 29px; display: flex; flex-direction: column; padding-left: 3px; gap: 2px; }
.vtabs button { height: 40px; display: flex; align-items: center; justify-content: center; background: #fbfbfb; border-bottom: 1px solid #777; }
.vtabs .vt-on { background: none; margin-left: -2px; }
.vtabs svg { width: 22px; height: 22px; }
fieldset { margin: 0; border: 1px solid #dcdcdc; padding: 0; min-width: 0; }
legend { padding: 0 2px; }
.mats { flex: 1; margin: 0 1px 4px; }
.mats legend { margin-left: 6px; }
.cols { display: flex; gap: 2px; padding: 2px 0 0 4px; }
.mcol { display: grid; grid-template-rows: repeat(13, 1fr); height: 422px; width: 47px; }
.mcol label { display: flex; align-items: flex-start; gap: 7px; }
.mcol svg { width: 24px; height: 24px; margin-top: 3px; }
.panel input[type=checkbox] { appearance: none; flex: none; width: 13px; height: 13px; margin: 4px 0 0; border: 1px solid #333; background: #fff; display: grid; place-items: center; }
.panel input[type=checkbox]:checked::after { content: ""; width: 8px; height: 4px; margin-bottom: 3px; border: solid #222; border-width: 0 0 1px 1px; transform: rotate(-45deg); }
.range { appearance: none; width: 44px; height: 16px; margin: 12px 0 0; padding: 0 5px; border: 1px solid #a0a0a0; border-color: #a0a0a0 #fff #fff #a0a0a0; background: linear-gradient(#d6d6d6, #d6d6d6) 5px 5px / 33px 4px no-repeat; }
.range::-webkit-slider-thumb { appearance: none; width: 4px; height: 8px; background: #0078d7; }
.prow { display: flex; align-items: center; justify-content: space-between; }
.pages + .prow { border-top: 1px solid #888; padding: 0 3px 3px 15px; height: 30px; }
.pb { width: 28px; height: 21px; background: #e1e1e1; border: 1px solid #adadad; display: flex; align-items: center; justify-content: center; }
.pb svg { width: 17px; height: 17px; }
.off { background: #ccc; border-color: #bfbfbf; }
.pg { display: flex; align-items: center; gap: 2px; border: 1px solid #dcdcdc; padding: 1px 3px 1px 2px; }
.panel .pg input { margin: 3px 0 0; }
.pset { border-width: 1px 0 1px 1px; }
.pset legend { margin-left: 5px; white-space: nowrap; }
.pset select { display: block; width: 138px; height: 22px; margin: 0 0 3px 2px; border: 1px solid #7a7a7a; appearance: none; background: linear-gradient(45deg, transparent 45%, #444 45% 60%, transparent 60%) calc(100% - 8px) 8px / 5px 5px no-repeat, linear-gradient(-45deg, transparent 45%, #444 45% 60%, transparent 60%) calc(100% - 4px) 8px / 5px 5px no-repeat, #fff; }
.pset .prow { padding: 0 9px 0 12px; }
.pset-b { margin-top: 7px; }
.pset-b legend { margin-left: 0; }
.pset-b .prow { padding: 2px 6px 0 10px; }
.pset-b .prow-2 { padding: 0 6px 0 53px; }
```
